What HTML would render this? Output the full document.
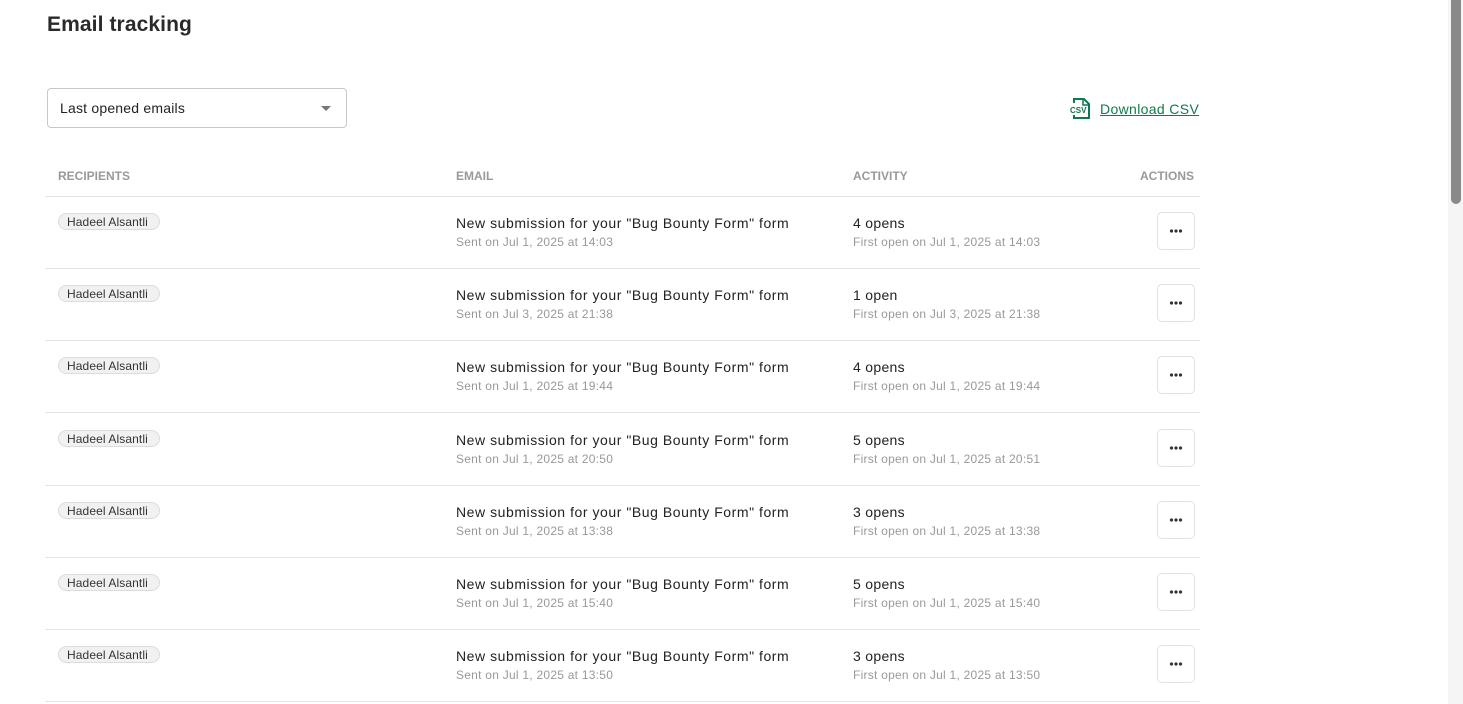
<!DOCTYPE html>
<html><head><meta charset="utf-8"><style>
*{margin:0;padding:0;box-sizing:border-box}
body{width:1463px;height:704px;overflow:hidden;background:#fff;font-family:"Liberation Sans",sans-serif;color:#222;position:relative}
.a{position:absolute;white-space:nowrap}
h1{position:absolute;left:47px;top:13px;font-size:21px;font-weight:bold;color:#2a2a2a;letter-spacing:0.1px}
.sel{position:absolute;left:47px;top:88px;width:300px;height:40px;border:1px solid #c8c8c8;border-radius:4px;font-size:14px;padding:11px 12px;color:#222;letter-spacing:0.2px}
.sel:after{content:"";position:absolute;right:15px;top:17px;border-left:5px solid transparent;border-right:5px solid transparent;border-top:5px solid #777}
.hd{font-size:12px;font-weight:bold;color:#999;top:169px}
.line{position:absolute;left:45px;width:1155px;height:1px;background:#e4e4e4}
.pill{position:absolute;left:58px;height:17px;border:1px solid #dcdcdc;background:#f1f1f1;border-radius:9px;font-size:12px;padding:1px 8px;color:#333;width:102px;letter-spacing:0.1px}
.t{font-size:14px;color:#222;letter-spacing:0.55px}
.s{font-size:12px;color:#999;letter-spacing:0.25px}
.btn{position:absolute;left:1157px;width:38px;height:38px;border:1px solid #e2e2e2;border-radius:5px;background:#fff}
</style></head><body>
<h1>Email tracking</h1>
<div class="sel">Last opened emails</div>
<svg class="a" style="left:1070px;top:98px" width="22" height="22" viewBox="0 0 22 22"><path d="M4 5V1h10l5 5v14H4v-3" fill="none" stroke="#0f7a4c" stroke-width="2"/><path d="M13 1v6h6" fill="none" stroke="#0f7a4c" stroke-width="1.5"/><text x="0" y="15" font-size="8" font-weight="bold" fill="#0f7a4c" font-family="Liberation Sans">CSV</text></svg>
<div class="a" style="left:1100px;top:101px;font-size:14px;color:#0f7a4c;text-decoration:underline;letter-spacing:0.35px">Download CSV</div>
<div class="a hd" style="left:58px">RECIPIENTS</div>
<div class="a hd" style="left:456px">EMAIL</div>
<div class="a hd" style="left:853px">ACTIVITY</div>
<div class="a hd" style="left:1140px">ACTIONS</div>
<div class="line" style="top:196px"></div>
<div id="rows"></div>
<div class="a" style="left:1448px;top:0;width:15px;height:704px;background:#f5f5f5"></div>
<div class="a" style="left:1451px;top:0;width:10px;height:204px;background:#8a8a8a;border-radius:0 0 5px 5px"></div>
<script>
var d=[["Jul 1, 2025 at 14:03","4 opens","Jul 1, 2025 at 14:03"],["Jul 3, 2025 at 21:38","1 open","Jul 3, 2025 at 21:38"],["Jul 1, 2025 at 19:44","4 opens","Jul 1, 2025 at 19:44"],["Jul 1, 2025 at 20:50","5 opens","Jul 1, 2025 at 20:51"],["Jul 1, 2025 at 13:38","3 opens","Jul 1, 2025 at 13:38"],["Jul 1, 2025 at 15:40","5 opens","Jul 1, 2025 at 15:40"],["Jul 1, 2025 at 13:50","3 opens","Jul 1, 2025 at 13:50"]];
var h="";var tops=[197,269,341,414,486,558,630];
d.forEach(function(r,i){var y=tops[i];
h+='<div class="pill" style="top:'+(y+16)+'px">Hadeel Alsantli</div>';
h+='<div class="a t" style="left:456px;top:'+(y+18)+'px">New submission for your "Bug Bounty Form" form</div>';
h+='<div class="a s" style="left:456px;top:'+(y+38)+'px">Sent on '+r[0]+'</div>';
h+='<div class="a t" style="left:853px;top:'+(y+18)+'px;letter-spacing:0.3px">'+r[1]+'</div>';
h+='<div class="a s" style="left:853px;top:'+(y+38)+'px">First open on '+r[2]+'</div>';
h+='<div class="btn" style="top:'+(y+15)+'px"><svg width="36" height="36" style="position:absolute;left:0;top:0"><circle cx="13.5" cy="18" r="1.6" fill="#333"/><circle cx="18" cy="18" r="1.6" fill="#333"/><circle cx="22.5" cy="18" r="1.6" fill="#333"/></svg></div>';
h+='<div class="line" style="top:'+(y+71)+'px"></div>';});
document.getElementById("rows").innerHTML=h;
</script>
</body></html>
